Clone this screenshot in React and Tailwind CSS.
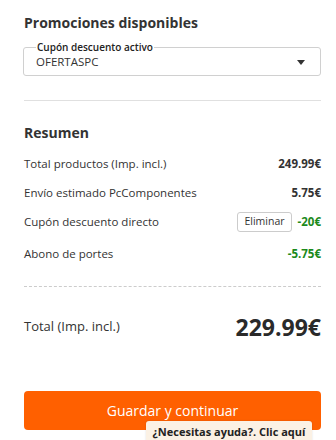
export default function App() {
    const rows = [
        { label: 'Total productos (Imp. incl.)', value: '249.99€', green: false },
        { label: 'Envío estimado PcComponentes', value: '5.75€', green: false },
        { label: 'Cupón descuento directo', value: '-20€', green: true, action: 'Eliminar' },
        { label: 'Abono de portes', value: '-5.75€', green: true },
    ];

    return (
        <div className="relative w-[336px] h-[440px] overflow-hidden bg-white text-[#333] font-['Open_Sans',sans-serif]">
            <div className="pl-6 pr-[15px]">
                <h2 className="pt-[13px] text-[14px] leading-[20px] font-bold">Promociones disponibles</h2>

                <fieldset className="mt-[8px] h-[35px] border border-[#d0d0d0] rounded-[3px] px-[12px] -ml-px">
                    <legend className="px-[1px] text-[10px] leading-[12px] font-semibold text-[#222]">
                        Cupón descuento activo
                    </legend>
                    <div className="flex items-center justify-between h-[26px] -mt-[4px]">
                        <span className="text-[11.5px] text-[#333]">OFERTASPC</span>
                        <svg width="8" height="5" viewBox="0 0 8 5" className="mr-[3px]">
                            <path d="M0 0h8L4 5z" fill="#333" />
                        </svg>
                    </div>
                </fieldset>

                <div className="mt-[24px] border-t border-[#e0e0e0]" />

                <h2 className="mt-[22px] text-[14px] leading-[20px] font-bold">Resumen</h2>

                <div className="mt-[6px] flex flex-col">
                    {rows.map((row, i) => (
                        <div
                            key={row.label}
                            className={`flex items-center justify-between ${i === 3 ? 'h-[32px] mt-[2px]' : 'h-[29px]'}`}
                        >
                            <span className="text-[11.5px] text-[#333]">{row.label}</span>
                            <div className="flex items-center gap-[6px]">
                                {row.action && (
                                    <button className="h-[20px] px-[6px] border border-[#ccc] rounded-[3px] text-[10.5px] leading-none text-[#333] bg-white">
                                        {row.action}
                                    </button>
                                )}
                                <span className={`text-[11.5px] font-bold ${row.green ? 'text-[#1c8a1c]' : 'text-[#333]'}`}>
                                    {row.value}
                                </span>
                            </div>
                        </div>
                    ))}
                </div>

                <div className="mt-[16px] border-t border-dashed border-[#ccc]" />

                <div className="mt-[23px] flex items-center justify-between h-[34px]">
                    <span className="text-[13px] text-[#333]">Total (Imp. incl.)</span>
                    <span className="text-[23px] font-bold text-[#2a2a2a]">229.99€</span>
                </div>

                <button className="mt-[47px] w-full h-[39px] rounded-[4px] bg-[#ff6000] text-white text-[14px]">
                    Guardar y continuar
                </button>
            </div>

            <div className="absolute left-[146px] top-[421px] w-[166px] h-[24px] bg-[#fbf1e4] rounded-t-[3px] shadow-[0_0_2px_rgba(0,0,0,0.15)] text-center text-[11px] font-bold text-[#222] leading-[22px]">
                ¿Necesitas ayuda?. Clic aquí
            </div>
        </div>
    );
}
